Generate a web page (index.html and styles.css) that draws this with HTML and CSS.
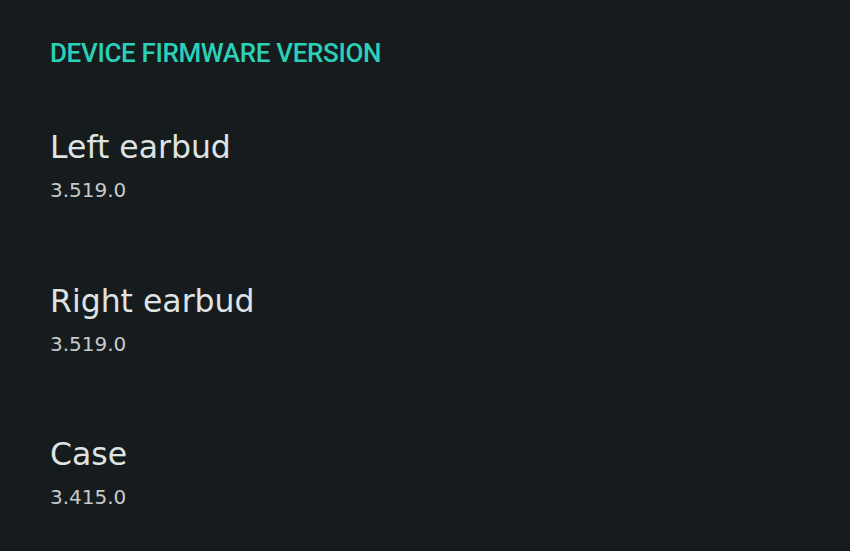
FILE: index.html
```html
<!DOCTYPE html>
<html>
<head>
<meta charset="utf-8">
<link rel="stylesheet" href="styles.css">
</head>
<body>
<main class="page">
  <h2 class="section-title">DEVICE FIRMWARE VERSION</h2>
  <ul class="list">
    <li class="item">
      <div class="item-title">Left earbud</div>
      <div class="item-sub">3.519.0</div>
    </li>
    <li class="item">
      <div class="item-title">Right earbud</div>
      <div class="item-sub">3.519.0</div>
    </li>
    <li class="item">
      <div class="item-title">Case</div>
      <div class="item-sub">3.415.0</div>
    </li>
  </ul>
</main>
</body>
</html>
```

FILE: styles.css
```css
html, body {
  margin: 0;
  padding: 0;
  background: #161c1e;
  height: 100%;
  overflow: hidden;
}
.page {
  padding: 38px 0 0 50px;
  font-family: Roboto, "Noto Sans", sans-serif;
}
.section-title {
  margin: 0;
  font-size: 26px;
  line-height: 30px;
  font-weight: 500;
  letter-spacing: -0.35px;
  color: #2bd0b8;
}
.list {
  list-style: none;
  margin: 60px 0 0 0;
  padding: 0;
  display: flex;
  flex-direction: column;
  gap: 79.5px;
}
.item {
  display: flex;
  flex-direction: column;
  gap: 12px;
}
.item-title {
  font-family: "DejaVu Sans", Roboto, sans-serif;
  font-size: 31.5px;
  line-height: 38px;
  color: #dfe3e3;
}
.item-sub {
  font-family: "DejaVu Sans", Roboto, sans-serif;
  font-size: 20px;
  line-height: 24px;
  color: #c6caca;
}
```
